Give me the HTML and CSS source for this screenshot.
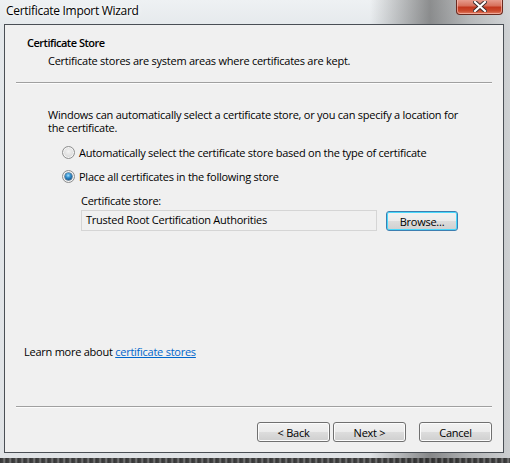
FILE: index.html
```html
<!DOCTYPE html>
<html>
<head>
<meta charset="utf-8">
<link rel="stylesheet" href="styles.css">
</head>
<body>
<div class="window">
  <div class="titlebar">
    <span class="title">Certificate Import Wizard</span>
    <div class="close">
      <svg width="14" height="11" viewBox="0 0 14 11">
        <path d="M2 1 L12 10 M12 1 L2 10" stroke="#3a2a2a" stroke-width="4" stroke-linecap="square"/>
        <path d="M2 1 L12 10 M12 1 L2 10" stroke="#ffffff" stroke-width="2.2" stroke-linecap="square"/>
      </svg>
    </div>
  </div>
  <div class="frame">
    <div class="client">
      <div class="header">
        <div class="h-title">Certificate Store</div>
        <div class="h-sub">Certificate stores are system areas where certificates are kept.</div>
      </div>
      <div class="sep"></div>
      <div class="main">
        <p class="intro">Windows can automatically select a certificate store, or you can specify a location for the certificate.</p>
        <div class="radio-row first">
          <span class="radio"></span>
          <span>Automatically select the certificate store based on the type of certificate</span>
        </div>
        <div class="radio-row">
          <span class="radio checked"></span>
          <span>Place all certificates in the following store</span>
        </div>
        <div class="store">
          <div class="store-label">Certificate store:</div>
          <div class="store-row">
            <div class="field">Trusted Root Certification Authorities</div>
            <button class="btn focus">Browse...</button>
          </div>
        </div>
        <div class="learn">Learn more about <a href="#">certificate stores</a></div>
      </div>
      <div class="sep"></div>
      <div class="footer">
        <button class="btn">&lt; Back</button>
        <button class="btn">Next &gt;</button>
        <button class="btn cancel">Cancel</button>
      </div>
    </div>
    <div class="right-edge"></div>
  </div>
  <div class="bottom-edge"></div>
</div>
</body>
</html>
```

FILE: styles.css
```css
html, body {
  margin: 0;
  padding: 0;
}
body {
  width: 510px;
  height: 463px;
  overflow: hidden;
  font-family: "Open Sans", "Noto Sans", sans-serif;
  font-size: 11px;
  letter-spacing: -0.25px;
  color: #000;
  background: #d9dde1;
}
.window {
  width: 510px;
  height: 463px;
  display: flex;
  flex-direction: column;
  background:
    linear-gradient(90deg, rgba(0,0,0,0) 0px, rgba(0,0,0,0) 370px, rgba(60,60,60,0.55) 430px, rgba(90,90,90,0.35) 470px, rgba(160,160,160,0.3) 510px),
    linear-gradient(180deg, #eef1f3 0px, #e4e8eb 30px, #e0e3e6 463px);
}
.titlebar {
  height: 24px;
  display: flex;
  align-items: flex-start;
  position: relative;
}
.title {
  margin: 3px 0 0 6px;
  font-size: 12px;
  letter-spacing: -0.3px;
  line-height: 16px;
  color: #000;
  text-shadow: 0 0 6px #fff, 0 0 3px #fff;
}
.close {
  position: absolute;
  left: 456px;
  top: -1px;
  width: 47px;
  height: 16px;
  box-sizing: border-box;
  border: 1px solid #6b2a1f;
  border-top: none;
  border-radius: 0 0 4px 4px;
  background: linear-gradient(180deg, #e9a395 0%, #d7705c 45%, #c2371e 55%, #cc4a2d 80%, #e0836a 100%);
  box-shadow: inset 0 0 0 1px rgba(255,200,190,0.6);
  display: flex;
  align-items: center;
  justify-content: center;
}
.frame {
  display: flex;
  padding-left: 4px;
}
.client {
  width: 500px;
  height: 429px;
  box-sizing: border-box;
  border: 1px solid #4a4f55;
  background: #f0f0f0;
  display: flex;
  flex-direction: column;
}
.right-edge {
  flex: 1;
}
.bottom-edge {
  flex: 1;
  margin-top: 5px;
  background: repeating-linear-gradient(90deg, #222 0px, #333 3px, #777 4px, #222 6px);
  opacity: 0.9;
}
.header {
  padding: 10px 0 0 22px;
}
.h-title {
  font-weight: 600;
  letter-spacing: -0.5px;
  line-height: 15px;
}
.h-sub {
  margin: 3px 0 0 21px;
  line-height: 15px;
}
.sep {
  margin: 0 11px;
  height: 0;
  border-top: 1px solid #a0a0a0;
  border-bottom: 1px solid #fcfcfc;
}
.header + .sep {
  margin-top: 14px;
}
.main {
  flex: 1;
  display: flex;
  flex-direction: column;
}
.intro {
  margin: 24px 40px 0 43px;
  line-height: 13px;
}
.radio-row {
  display: flex;
  align-items: center;
  gap: 4px;
  height: 16px;
  margin: 8px 0 0 57px;
}
.radio-row.first {
  margin-top: 10px;
}
.radio {
  width: 13px;
  height: 13px;
  box-sizing: border-box;
  border-radius: 50%;
  border: 1px solid #8e8f8f;
  background: radial-gradient(circle at 50% 40%, #f4f4f4 0%, #dcdcdc 60%, #c8c8c8 100%);
  box-shadow: inset 0 0 0 1px #f6f6f6;
  position: relative;
}
.radio.checked::after {
  content: "";
  position: absolute;
  left: 2px;
  top: 2px;
  width: 7px;
  height: 7px;
  border-radius: 50%;
  background: radial-gradient(circle at 45% 35%, #a6e0ff 0%, #3b97d3 35%, #0c4f8a 80%, #0a3e6e 100%);
  box-shadow: 0 0 0 0.5px #1b4a6f;
}
.store {
  margin: 9px 0 0 76px;
}
.store-label {
  line-height: 15px;
}
.store-row {
  display: flex;
  align-items: flex-start;
  margin-top: 2px;
  gap: 9px;
}
.field {
  width: 296px;
  height: 21px;
  box-sizing: border-box;
  border: 1px solid #d5d5d5;
  background: #f0f0f0;
  padding: 0 4px;
  line-height: 17px;
}
.btn {
  width: 73px;
  height: 21px;
  box-sizing: border-box;
  border: 1px solid #707070;
  border-radius: 3px;
  background: linear-gradient(180deg, #f2f2f2 0%, #ebebeb 50%, #dddddd 50%, #cfcfcf 100%);
  box-shadow: inset 0 0 0 1px #fcfcfc;
  font-family: inherit;
  font-size: 11px;
  letter-spacing: -0.25px;
  color: #000;
  padding: 0;
  line-height: 17px;
}
.btn.focus {
  border-color: #3c7fb1;
  box-shadow: inset 0 0 0 1px #48d8fb;
  margin-top: 1px;
  height: 20px;
  width: 72px;
}
.learn {
  margin: auto 0 47px 19px;
  line-height: 15px;
}
.learn a {
  color: #0066cc;
  text-decoration: underline;
}
.footer {
  display: flex;
  justify-content: flex-end;
  padding: 14px 11px 10px 0;
  gap: 3px;
}
.footer .btn {
  height: 20px;
}
.footer .cancel {
  margin-left: 10px;
}
```
